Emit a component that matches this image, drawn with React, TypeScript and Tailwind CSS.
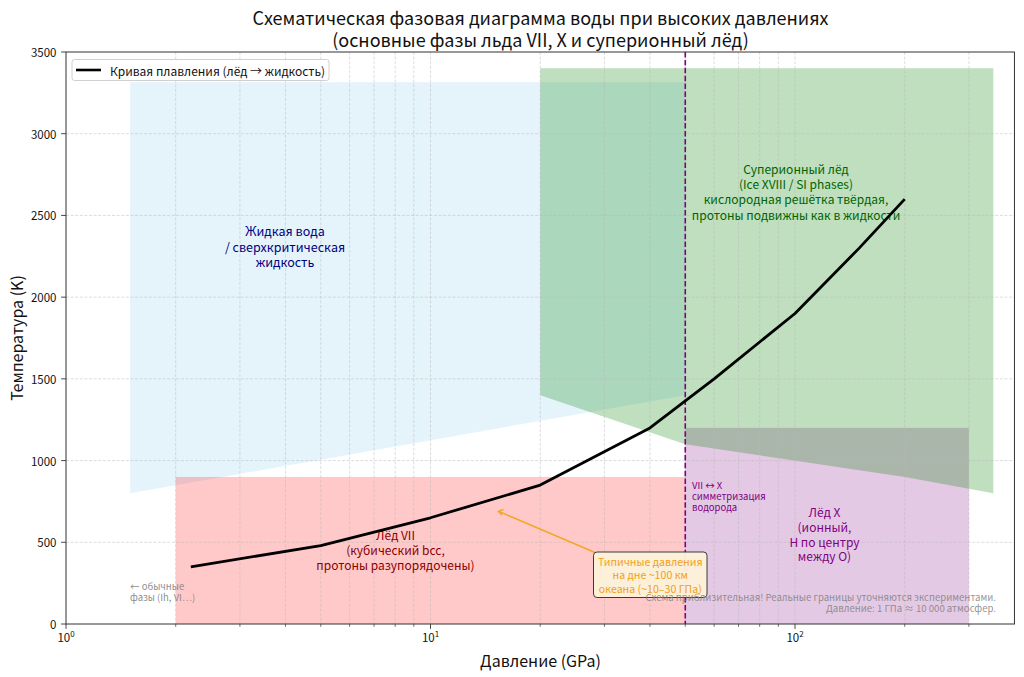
import React from "react";

const X = (p: number) => 66 + 364.5 * Math.log10(p);
const Y = (t: number) => 624 - (t * 572) / 3500;
const pts = (arr: [number, number][]) =>
  arr.map(([p, t]) => `${X(p).toFixed(2)},${Y(t).toFixed(2)}`).join(" ");

type LinesProps = {
  x: number;
  ys: number[];
  lines: string[];
  color: string;
  size: number;
  anchor?: "start" | "middle" | "end";
  opacity?: number;
};

function Lines({ x, ys, lines, color, size, anchor = "middle", opacity = 1 }: LinesProps) {
  return (
    <>
      {lines.map((l, i) => (
        <text
          key={i}
          x={x}
          y={ys[i]}
          fill={color}
          fillOpacity={opacity}
          fontSize={size}
          textAnchor={anchor}
          dominantBaseline="central"
        >
          {l}
        </text>
      ))}
    </>
  );
}

const LEFT = 66;
const RIGHT = X(400);
const TOP = 52;
const BOTTOM = 624;

export default function App() {
  const minor: number[] = [];
  for (const d of [1, 10, 100]) {
    for (let k = 2; k <= 9; k++) {
      const v = d * k;
      if (v < 400) minor.push(v);
    }
  }
  const majorX = [1, 10, 100];
  const yTicks = [0, 500, 1000, 1500, 2000, 2500, 3000, 3500];

  const curve: [number, number][] = [
    [2.2, 350],
    [5, 480],
    [10, 650],
    [20, 850],
    [40, 1200],
    [60, 1500],
    [100, 1900],
    [150, 2300],
    [200, 2600],
  ];

  const liquid: [number, number][] = [
    [1.5, 800],
    [50, 1400],
    [50, 3315],
    [1.5, 3315],
  ];
  const superionic: [number, number][] = [
    [20, 3400],
    [350, 3400],
    [350, 800],
    [200, 900],
    [50, 1100],
    [20, 1400],
  ];

  return (
    <div className="w-[1024px] h-[677px] bg-white overflow-hidden text-[#111] font-['Noto_Sans_CJK_JP','Noto_Sans',sans-serif]">
      <div className="ml-[66px] w-[949px] h-[52px] pt-[6px] flex flex-col items-center text-[18px] leading-[22px]">
        <div>Схематическая фазовая диаграмма воды при высоких давлениях</div>
        <div>(основные фазы льда VII, X и суперионный лёд)</div>
      </div>
      <div className="flex h-[596px]">
        <div className="w-[32px] h-[572px] shrink-0 flex items-center justify-center">
          <span className="-rotate-90 whitespace-nowrap shrink-0 text-[16px] leading-none">
            Температура (K)
          </span>
        </div>
        <svg width={992} height={596} viewBox="32 52 992 596" overflow="visible" className="shrink-0 overflow-visible">
          {/* phase regions */}
          <polygon points={pts(liquid)} fill="#87ceeb" fillOpacity={0.22} />
          <rect x={X(2)} y={Y(900)} width={X(50) - X(2)} height={Y(0) - Y(900)} fill="#ff0000" fillOpacity={0.21} />
          <rect x={X(50)} y={Y(1200)} width={X(300) - X(50)} height={Y(0) - Y(1200)} fill="#800080" fillOpacity={0.21} />
          <polygon points={pts(superionic)} fill="#008000" fillOpacity={0.25} />

          {/* grid */}
          {[...minor, 10, 100].map((p) => (
            <line key={"gx" + p} x1={X(p)} x2={X(p)} y1={TOP} y2={BOTTOM} stroke="#b8b8b8" strokeOpacity={0.6} strokeWidth={0.8} strokeDasharray="3 1.6" />
          ))}
          {yTicks.slice(1, -1).map((t) => (
            <line key={"gy" + t} x1={LEFT} x2={RIGHT} y1={Y(t)} y2={Y(t)} stroke="#b8b8b8" strokeOpacity={0.6} strokeWidth={0.8} strokeDasharray="3 1.6" />
          ))}

          {/* region labels */}
          <Lines x={285} ys={[230.7, 246, 261.7]} lines={["Жидкая вода", "/ сверхкритическая", "жидкость"]} color="#000080" size={12.5} />
          <Lines
            x={796}
            ys={[168.3, 183.5, 198.8, 214]}
            lines={["Суперионный лёд", "(Ice XVIII / SI phases)", "кислородная решётка твёрдая,", "протоны подвижны как в жидкости"]}
            color="#006400"
            size={12}
          />
          <Lines x={395.5} ys={[534, 549.2, 564.4]} lines={["Лёд VII", "(кубический bcc,", "протоны разупорядочены)"]} color="#8b0000" size={12} />
          <Lines x={824.5} ys={[511.7, 526.3, 541, 555.6]} lines={["Лёд X", "(ионный,", "H по центру", "между O)"]} color="#800080" size={12} />
          <Lines x={692} ys={[485, 496.2, 507.4]} lines={["VII ↔ X", "симметризация", "водорода"]} color="#800080" size={9.5} anchor="start" />
          <Lines x={130} ys={[585.8, 597.4]} lines={["← обычные", "фазы (Ih, VI…)"]} color="#808080" size={9.5} anchor="start" opacity={0.9} />

          {/* vertical transition line */}
          <line x1={X(50)} x2={X(50)} y1={TOP} y2={BOTTOM} stroke="#800080" strokeWidth={1.6} strokeDasharray="5.5 2.4" />

          {/* melting curve */}
          <polyline points={pts(curve)} fill="none" stroke="#000" strokeWidth={2.8} strokeLinejoin="round" />

          {/* annotation */}
          <line x1={595} y1={552.5} x2={499} y2={511.5} stroke="#f5a623" strokeWidth={1.5} />
          <polyline points="503.5,509.5 498.5,511.3 502,515.3" fill="none" stroke="#f5a623" strokeWidth={1.5} />
          <rect x={593.5} y={552} width={113.5} height={45.5} rx={3.5} fill="#fdf2d9" fillOpacity={0.95} stroke="#3a3a3a" strokeWidth={1} />
          <Lines x={650.3} ys={[561, 574.6, 588]} lines={["Типичные давления", "на дне ~100 км", "океана (~10–30 ГПа)"]} color="#f0a020" size={10.6} />

          {/* footnote */}
          <Lines
            x={996}
            ys={[597.3, 608.3]}
            lines={["Схема приблизительная! Реальные границы уточняются экспериментами.", "Давление: 1 ГПа ≈ 10 000 атмосфер."]}
            color="#808080"
            size={9.6}
            anchor="end"
            opacity={0.85}
          />

          {/* legend */}
          <rect x={72} y={59.5} width={257} height={21} rx={2.5} fill="#fff" fillOpacity={0.85} stroke="#d0d0d0" strokeWidth={1} />
          <line x1={76} x2={101} y1={70} y2={70} stroke="#000" strokeWidth={2.6} />
          <text x={110} y={70.3} fontSize={12} fill="#111" dominantBaseline="central">
            Кривая плавления (лёд → жидкость)
          </text>

          {/* spines */}
          <rect x={LEFT} y={TOP} width={RIGHT - LEFT} height={BOTTOM - TOP} fill="none" stroke="#333" strokeWidth={1} />

          {/* y ticks */}
          {yTicks.map((t) => (
            <g key={"yt" + t}>
              <line x1={LEFT - 4.9} x2={LEFT} y1={Y(t)} y2={Y(t)} stroke="#333" strokeWidth={0.9} />
              <text x={56.5} y={Y(t)} fontSize={11.5} textAnchor="end" dominantBaseline="central" fill="#111">
                {t}
              </text>
            </g>
          ))}

          {/* x ticks */}
          {minor.map((p) => (
            <line key={"mx" + p} x1={X(p)} x2={X(p)} y1={BOTTOM} y2={BOTTOM + 2.8} stroke="#333" strokeWidth={0.7} />
          ))}
          {majorX.map((p, i) => (
            <g key={"Mx" + p}>
              <line x1={X(p)} x2={X(p)} y1={BOTTOM} y2={BOTTOM + 4.9} stroke="#333" strokeWidth={0.9} />
              <text x={X(p)} y={642} fontSize={11.5} textAnchor="middle" fill="#111">
                10
                <tspan fontSize={8} dy={-5}>
                  {i}
                </tspan>
              </text>
            </g>
          ))}
        </svg>
      </div>
      <div className="ml-[66px] w-[949px] text-center text-[16px] leading-[24px]">Давление (GPa)</div>
    </div>
  );
}
